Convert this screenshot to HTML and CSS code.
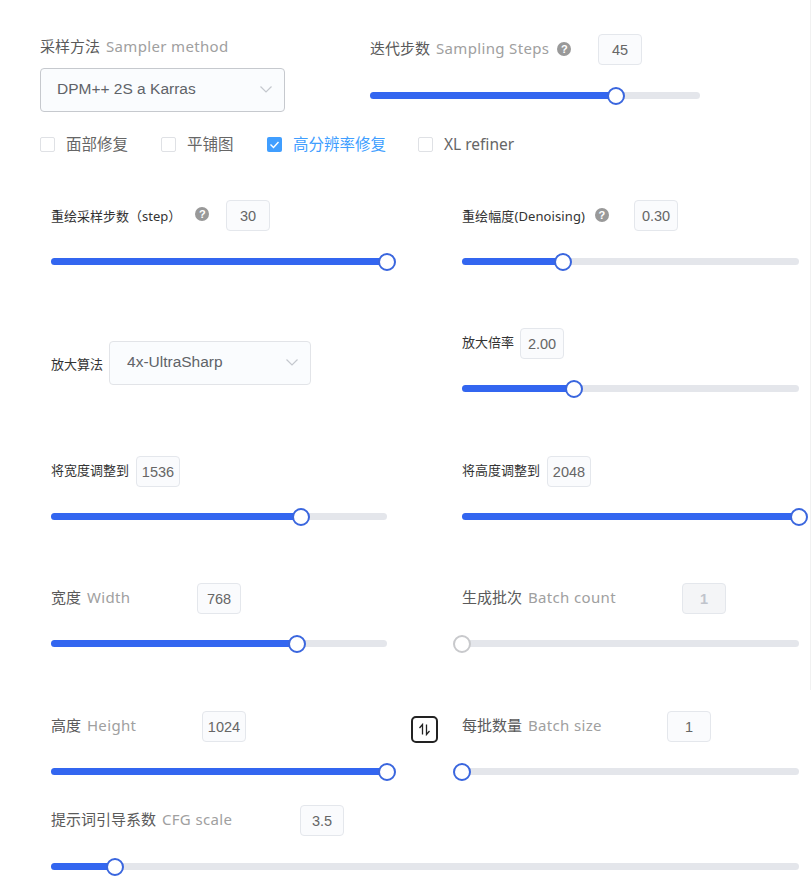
FILE: index.html
```html
<!DOCTYPE html>
<html lang="en">
<head>
  <meta charset="UTF-8" />
  <meta name="viewport" content="width=device-width, initial-scale=1" />
  <title>Sampling settings</title>
  <link rel="stylesheet" href="styles.css">
</head>
<body>
  <div class="page-edge"></div>

  <div class="sampler">
    <div class="sampler-method">
      <div class="label large">采样方法 <span class="en">Sampler method</span></div>
      <div class="select select-dark">
        <span>DPM++ 2S a Karras</span>
        <svg class="chevron" width="14" height="8" viewBox="0 0 14 8"><path d="M1.5 1.5l5.500 5.500 5.500-5.500" /></svg>
      </div>
    </div>
    <div class="sampler-steps">
      <div class="head">
        <div class="label large lw-228">迭代步数 <span class="en">Sampling Steps</span> <span class="help">?</span></div>
        <div class="num">45</div>
      </div>
      <div class="slider"><div class="fill" style="width: 74.5%"></div><div class="thumb" style="left: 74.5%"></div></div>
    </div>
  </div>

  <!-- Checkboxes -->
  <div class="checks">
    <div class="check c1"><span class="box"></span>面部修复</div>
    <div class="check c2"><span class="box"></span>平铺图</div>
    <div class="check c3 on">
      <span class="box"><svg width="15" height="15" viewBox="0 0 15 15"><path d="M3.500 7.500l3 3 5-5.500" /></svg></span>高分辨率修复
    </div>
    <div class="check"><span class="box"></span>XL refiner</div>
  </div>

  <!-- Hires row 1 -->
  <div class="row row-first tall">
    <div class="col">
      <div class="head">
        <div class="label small lw-175">重绘采样步数（step）<span class="help help-a">?</span></div>
        <div class="num">30</div>
      </div>
      <div class="slider"><div class="fill" style="width: 100%"></div><div class="thumb" style="left: 100%"></div></div>
    </div>
    <div></div>
    <div class="col">
      <div class="head">
        <div class="label small lw-172">重绘幅度(Denoising)<span class="help help-b">?</span></div>
        <div class="num">0.30</div>
      </div>
      <div class="slider"><div class="fill" style="width: 30%"></div><div class="thumb" style="left: 30%"></div></div>
    </div>
  </div>

  <!-- Upscaler -->
  <div class="row row-a">
    <div class="col upscaler">
      <div class="label small">放大算法</div>
      <div class="select select-small">
        <span>4x-UltraSharp</span>
        <svg class="chevron" width="14" height="8" viewBox="0 0 14 8"><path d="M1.500 1.500l5.500 5.500 5.500-5.500" /></svg>
      </div>
    </div>
    <div></div>
    <div class="col">
      <div class="head">
        <div class="label small lw-58">放大倍率</div>
        <div class="num">2.00</div>
      </div>
      <div class="slider"><div class="fill" style="width: 33.2%"></div><div class="thumb" style="left: 33.2%"></div></div>
    </div>
  </div>

  <!-- Resize to -->
  <div class="row">
    <div class="col">
      <div class="head">
        <div class="label small lw-85">将宽度调整到</div>
        <div class="num">1536</div>
      </div>
      <div class="slider"><div class="fill" style="width: 74.3%"></div><div class="thumb" style="left: 74.3%"></div></div>
    </div>
    <div></div>
    <div class="col">
      <div class="head">
        <div class="label small lw-85">将高度调整到</div>
        <div class="num">2048</div>
      </div>
      <div class="slider"><div class="fill" style="width: 100%"></div><div class="thumb" style="left: 100%"></div></div>
    </div>
  </div>

  <!-- Width / batch count -->
  <div class="row row-a">
    <div class="col">
      <div class="head">
        <div class="label large lw-146">宽度 <span class="en">Width</span></div>
        <div class="num">768</div>
      </div>
      <div class="slider"><div class="fill" style="width: 73.2%"></div><div class="thumb" style="left: 73.2%"></div></div>
    </div>
    <div></div>
    <div class="col">
      <div class="head">
        <div class="label large lw-220">生成批次 <span class="en">Batch count</span></div>
        <div class="num disabled">1</div>
      </div>
      <div class="slider"><div class="thumb thumb-off" style="left: 0"></div></div>
    </div>
  </div>

  <!-- Height / batch size -->
  <div class="row">
    <div class="col">
      <div class="head">
        <div class="label large lw-151">高度 <span class="en">Height</span></div>
        <div class="num">1024</div>
      </div>
      <div class="slider"><div class="fill" style="width: 100%"></div><div class="thumb" style="left: 100%"></div></div>
    </div>
    <div class="swap-cell">
      <button class="swap">
        <svg width="13" height="13" viewBox="0 0 13 13"><path d="M4.500 11.500v-10L1.500 5M8.500 1.500v10L11.500 8" /></svg>
      </button>
    </div>
    <div class="col">
      <div class="head">
        <div class="label large lw-205">每批数量 <span class="en">Batch size</span></div>
        <div class="num">1</div>
      </div>
      <div class="slider"><div class="thumb" style="left: 0"></div></div>
    </div>
  </div>

  <!-- CFG -->
  <div class="row-wide tall">
    <div class="head">
      <div class="label large lw-249">提示词引导系数 <span class="en">CFG scale</span></div>
      <div class="num">3.5</div>
    </div>
    <div class="slider"><div class="fill" style="width: 8.6%"></div><div class="thumb" style="left: 8.6%"></div></div>
  </div>
</body>
</html>
```

FILE: styles.css
```css
/* Basic styling */
body {
  position: relative;
  margin: 0;
  height: 895px;
  overflow: hidden;
  background-color: #fff;
  font-family: "Noto Sans", "Noto Sans CJK SC", sans-serif;
}

.page-edge {
  position: absolute;
  top: 0;
  right: 0;
  width: 1px;
  height: 690px;
  background-color: #f1f1f1;
}

/* Top block */
.sampler {
  display: flex;
  padding: 34px 0 0 40px;
}

.sampler-method {
  width: 245px;
  margin-right: 85px;
  padding-top: 2px;
}

.sampler-method .label {
  height: 20px;
  line-height: 20px;
  margin-bottom: 12px;
}

.sampler-steps {
  width: 330px;
}

.sampler-steps .slider {
  margin-top: 27px;
}

/* Text */
.label {
  color: #5a5a5a;
  white-space: nowrap;
}

.head .label {
  position: relative;
  top: -2px;
}

.row-first .head .label {
  top: 0;
}

.label.large {
  font-size: 15px;
}

.label.small {
  font-size: 13px;
  color: #333;
}

.en {
  margin-left: 2px;
  color: #a0a0a0;
  letter-spacing: 0.35px;
}

.help {
  display: inline-block;
  width: 14px;
  height: 14px;
  margin-left: 4px;
  border-radius: 50%;
  background-color: #999;
  color: #fff;
  font: bold 11px/14px "Liberation Sans", sans-serif;
  text-align: center;
  vertical-align: 1px;
}

.help-a {
  margin-left: 14px;
  vertical-align: 3px;
}

.help-b {
  margin-left: 10px;
  vertical-align: 2px;
}

/* Select */
.select {
  display: flex;
  align-items: center;
  justify-content: space-between;
  box-sizing: border-box;
  height: 44px;
  padding: 0 11px 2px 16px;
  border: 1px solid #e2e4e8;
  border-radius: 4px;
  background-color: #fafcfe;
  color: #5f6368;
  font: 15.5px "Liberation Sans", sans-serif;
}

.select-dark {
  border-color: #c6c9ce;
}

.select-small {
  width: 202px;
  margin-left: 6px;
  padding-left: 17px;
}

.chevron path {
  fill: none;
  stroke: #c4c8ce;
  stroke-width: 1.2;
}

/* Number box */
.head {
  display: flex;
  align-items: center;
  height: 31px;
}

.num {
  box-sizing: border-box;
  width: 44px;
  height: 31px;
  border: 1px solid #e4e7ec;
  border-radius: 4px;
  background-color: #fafbfd;
  color: #666;
  font: 14.5px/30px "Liberation Sans", sans-serif;
  text-align: center;
}

.num.disabled {
  background-color: #f4f5f7;
  color: #c0c4cc;
  font-weight: bold;
}

.lw-58 { width: 58px; }
.lw-85 { width: 85px; }
.lw-146 { width: 146px; }
.lw-151 { width: 151px; }
.lw-172 { width: 172px; letter-spacing: 0.1px; }
.lw-175 { width: 175px; }
.lw-205 { width: 205px; }
.lw-220 { width: 220px; }
.lw-228 { width: 228px; }
.lw-249 { width: 249px; }

/* Slider */
.slider {
  position: relative;
  height: 7px;
  margin-top: 26px;
  border-radius: 4px;
  background-color: #e4e6eb;
}

.tall .slider {
  margin-top: 27px;
}

.fill {
  height: 100%;
  border-radius: 4px;
  background-color: #3366f0;
}

.thumb {
  position: absolute;
  top: -5.5px;
  box-sizing: border-box;
  width: 18px;
  height: 18px;
  margin-left: -9px;
  border: 2.5px solid #3a66de;
  border-radius: 50%;
  background-color: #fff;
}

.thumb-off {
  border-color: #c8c9cc;
}

/* Checkboxes */
.checks {
  display: flex;
  height: 15px;
  margin-top: 25px;
  padding-left: 40px;
}

.check {
  display: flex;
  align-items: center;
  color: #666;
  font-size: 15.5px;
  line-height: 13px;
  white-space: nowrap;
}

.c1 { width: 121px; }
.c2 { width: 106px; }
.c3 { width: 151px; }

.box {
  flex: none;
  box-sizing: border-box;
  width: 15px;
  height: 15px;
  margin-right: 11px;
  border: 1px solid #dfe1e5;
  border-radius: 2px;
  background-color: #fff;
}

.on {
  color: #409eff;
}

.on .box {
  border: 0;
  background-color: #409eff;
}

.on svg {
  display: block;
}

.on svg path {
  fill: none;
  stroke: #fff;
  stroke-width: 1.4;
}

/* Two column rows */
.row {
  display: grid;
  grid-template-columns: 336px 75px 337px;
  margin: 64px 0 0 51px;
}

.row-a {
  margin-top: 63px;
}

.row-first {
  margin-top: 48px;
}

.upscaler {
  display: flex;
  align-items: center;
  align-self: start;
  margin-top: 13px;
}

.swap-cell {
  padding: 5px 0 0 24px;
}

.swap {
  display: flex;
  align-items: center;
  justify-content: center;
  box-sizing: border-box;
  width: 27px;
  height: 27px;
  padding: 0;
  border: 2px solid #222;
  border-radius: 5px;
  background-color: #fff;
}

.swap path {
  fill: none;
  stroke: #222;
  stroke-width: 1.3;
}

.row-wide {
  width: 748px;
  margin: 30px 0 0 51px;
}
```
